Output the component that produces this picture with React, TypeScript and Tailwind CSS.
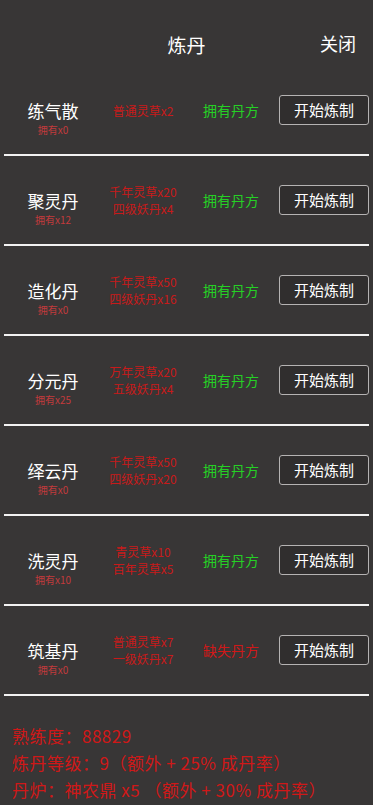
import React from 'react';

interface Recipe {
  name: string;
  owned: number;
  materials: string[];
  hasRecipe: boolean;
}

const recipes: Recipe[] = [
  { name: '练气散', owned: 0, materials: ['普通灵草x2'], hasRecipe: true },
  { name: '聚灵丹', owned: 12, materials: ['千年灵草x20', '四级妖丹x4'], hasRecipe: true },
  { name: '造化丹', owned: 0, materials: ['千年灵草x50', '四级妖丹x16'], hasRecipe: true },
  { name: '分元丹', owned: 25, materials: ['万年灵草x20', '五级妖丹x4'], hasRecipe: true },
  { name: '绎云丹', owned: 0, materials: ['千年灵草x50', '四级妖丹x20'], hasRecipe: true },
  { name: '洗灵丹', owned: 10, materials: ['青灵草x10', '百年灵草x5'], hasRecipe: true },
  { name: '筑基丹', owned: 0, materials: ['普通灵草x7', '一级妖丹x7'], hasRecipe: false },
];

const font = { fontFamily: '"Noto Sans CJK SC", "Noto Sans", sans-serif' };

function RecipeRow({ recipe }: { recipe: Recipe }) {
  return (
    <div>
      <div className="flex h-[88px] items-center">
        {/* Name + owned count */}
        <div className="flex w-[106px] flex-col items-center pt-[17px]">
          <span className="text-[17px] leading-[22px] text-white">{recipe.name}</span>
          <span className="text-[10px] leading-[15px] text-[#c23a3c]">拥有x{recipe.owned}</span>
        </div>

        {/* Materials */}
        <div className="flex w-[74px] flex-col items-center">
          {recipe.materials.map((m) => (
            <span key={m} className="whitespace-nowrap text-[12px] leading-[17px] text-[#c81a1a]">
              {m}
            </span>
          ))}
        </div>

        {/* Recipe status */}
        <div className="ml-[10px] flex w-[82px] justify-center">
          <span
            className={
              recipe.hasRecipe
                ? 'text-[14px] text-[#25d025]'
                : 'text-[14px] text-[#d01818]'
            }
          >
            {recipe.hasRecipe ? '拥有丹方' : '缺失丹方'}
          </span>
        </div>

        <button className="ml-[7px] h-[30px] w-[90px] rounded-[3px] border border-[#b5b3b3] bg-[#302e2e] text-[15px] text-white">
          开始炼制
        </button>
      </div>
      <div className="mx-[4px] h-[2px] bg-[#f2f2f2]" />
    </div>
  );
}

export default function App() {
  return (
    <div className="min-h-[805px] w-[373px] overflow-hidden bg-[#383636]" style={font}>
      {/* Header */}
      <div className="relative flex h-[66px] items-start justify-center pt-[33px]">
        <span className="text-[19px] leading-[24px] text-white">炼丹</span>
        <span className="absolute right-[17px] top-[31px] text-[18px] leading-[24px] text-white">关闭</span>
      </div>

      {recipes.map((r) => (
        <RecipeRow key={r.name} recipe={r} />
      ))}

      {/* Stats */}
      <div className="flex flex-col whitespace-nowrap pl-[12px] pt-[26px] text-[17px] leading-[27px] tracking-[0.5px] text-[#d01818]">
        <span>熟练度：88829</span>
        <span>炼丹等级：9（额外 + 25% 成丹率）</span>
        <span>丹炉：神农鼎 x5 （额外 + 30% 成丹率）</span>
      </div>
    </div>
  );
}
